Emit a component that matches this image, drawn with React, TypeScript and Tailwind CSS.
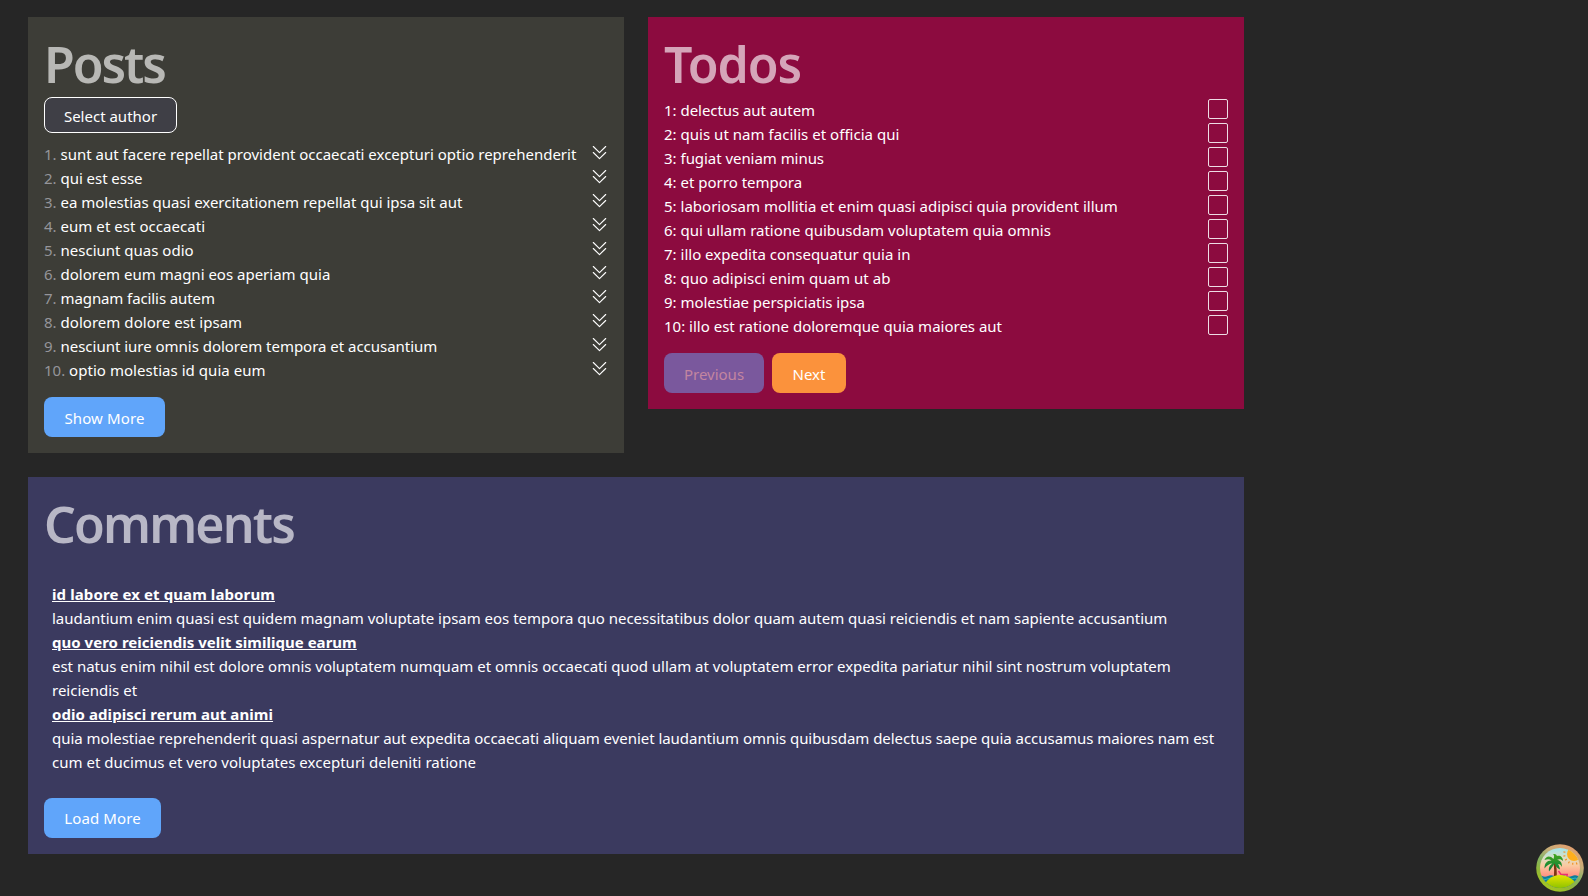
const posts = [
  { t: "sunt aut facere repellat provident occaecati excepturi optio reprehenderit", c: "" },
  { t: "qui est esse", c: "tracking-[-0.05px]" },
  { t: "ea molestias quasi exercitationem repellat qui ipsa sit aut", c: "tracking-[-0.02px]" },
  { t: "eum et est occaecati", c: "tracking-[0.05px]" },
  { t: "nesciunt quas odio", c: "" },
  { t: "dolorem eum magni eos aperiam quia", c: "" },
  { t: "magnam facilis autem", c: "tracking-[-0.1px]" },
  { t: "dolorem dolore est ipsam", c: "tracking-[0.04px]" },
  { t: "nesciunt iure omnis dolorem tempora et accusantium", c: "tracking-[-0.02px]" },
  { t: "optio molestias id quia eum", c: "tracking-[0.04px]" },
];

const todos = [
  { t: "delectus aut autem", c: "tracking-[-0.06px]" },
  { t: "quis ut nam facilis et officia qui", c: "tracking-[0.03px]" },
  { t: "fugiat veniam minus", c: "tracking-[-0.05px]" },
  { t: "et porro tempora", c: "" },
  { t: "laboriosam mollitia et enim quasi adipisci quia provident illum", c: "tracking-[0.01px]" },
  { t: "qui ullam ratione quibusdam voluptatem quia omnis", c: "" },
  { t: "illo expedita consequatur quia in", c: "" },
  { t: "quo adipisci enim quam ut ab", c: "tracking-[0.04px]" },
  { t: "molestiae perspiciatis ipsa", c: "tracking-[-0.04px]" },
  { t: "illo est ratione doloremque quia maiores aut", c: "" },
];

const comments = [
  {
    name: "id labore ex et quam laborum",
    nameClass: "tracking-[0.1px]",
    body: [
      {
        t: "laudantium enim quasi est quidem magnam voluptate ipsam eos tempora quo necessitatibus dolor quam autem quasi reiciendis et nam sapiente accusantium",
        c: "tracking-[-0.022px]",
      },
    ],
  },
  {
    name: "quo vero reiciendis velit similique earum",
    nameClass: "tracking-[0.02px]",
    body: [
      {
        t: "est natus enim nihil est dolore omnis voluptatem numquam et omnis occaecati quod ullam at voluptatem error expedita pariatur nihil sint nostrum voluptatem",
        c: "tracking-[-0.012px]",
      },
      { t: "reiciendis et", c: "" },
    ],
  },
  {
    name: "odio adipisci rerum aut animi",
    nameClass: "tracking-[0.07px]",
    body: [
      {
        t: "quia molestiae reprehenderit quasi aspernatur aut expedita occaecati aliquam eveniet laudantium omnis quibusdam delectus saepe quia accusamus maiores nam est",
        c: "tracking-[-0.043px]",
      },
      { t: "cum et ducimus et vero voluptates excepturi deleniti ratione", c: "tracking-[0.02px]" },
    ],
  },
];

function DoubleChevron() {
  return (
    <svg viewBox="0 0 16 16" className="mt-[3px] size-4 shrink-0" fill="none" stroke="currentColor" strokeWidth="1.1" strokeLinecap="round" strokeLinejoin="round">
      <path d="M1.3 2.5 7.5 8.7 13.7 2.5M1.3 8.5 7.5 14.7 13.7 8.5" />
    </svg>
  );
}

function IslandButton() {
  return (
    <button aria-label="Devtools" className="fixed right-1 bottom-1 size-12">
      <svg viewBox="0 0 48 48" className="size-12">
        <defs>
          <linearGradient id="ring" x1="0.8" y1="0.1" x2="0.3" y2="1">
            <stop offset="0" stopColor="#dfa070" />
            <stop offset="0.25" stopColor="#c9ad78" />
            <stop offset="0.5" stopColor="#82b264" />
            <stop offset="0.75" stopColor="#93b835" />
            <stop offset="1" stopColor="#a5c81f" />
          </linearGradient>
          <linearGradient id="sky" x1="0" y1="0" x2="0" y2="1">
            <stop offset="0.08" stopColor="#a0e4ec" />
            <stop offset="0.28" stopColor="#d8e0c8" />
            <stop offset="0.45" stopColor="#fbc9a0" />
            <stop offset="0.68" stopColor="#ff8f80" />
          </linearGradient>
          <linearGradient id="sand" x1="0" y1="0" x2="0" y2="1">
            <stop offset="0" stopColor="#e5e400" />
            <stop offset="1" stopColor="#76b900" />
          </linearGradient>
          <linearGradient id="leaf" x1="0" y1="0" x2="0" y2="1">
            <stop offset="0" stopColor="#43a51d" />
            <stop offset="1" stopColor="#087c3f" />
          </linearGradient>
          <clipPath id="disc"><circle cx="24" cy="24" r="20" /></clipPath>
        </defs>
        <circle cx="24" cy="24" r="23.8" fill="url(#ring)" />
        <g clipPath="url(#disc)">
          <rect width="48" height="48" fill="url(#sky)" />
          <circle cx="38" cy="10" r="7" fill="#ffae1c" />
          <circle cx="38" cy="10" r="9.8" fill="none" stroke="#ef9125" strokeWidth="2" strokeDasharray="1.2 2.8" />
          <path d="M0 32q3-1.5 6 0t6 0 6 0 6 0 6 0 6 0 6 0 6 0V48H0Z" fill="#0b7f9b" />
          <path d="M0 34.8q3-1.5 6 0t6 0 6 0 6 0 6 0 6 0 6 0 6 0" fill="none" stroke="#2fb7c0" strokeWidth="1" />
          <path d="M17 17q2 8 .5 18h3q1-11-1.500-18Z" fill="#7d3510" />
          <path d="M17.500 15C14 11 10 12 8.500 16c3-1 5-1 7 .5-5 0-7 3-7 8 2-3 5-5 8-5-3 2-4 4-3.500 8 2-3 4-5 5.500-8 1 3 3 5 5.500 6-.5-3-1-4-2-5.500 2 0 3 1 4 3 0-5-2-7-5-7 2-1 4-1 6 1 0-4-3-6-6-5-1-2-2-2-4-2 1 1 1.500 2 .5 5Z" fill="url(#leaf)" />
          <path d="m22.500 27 2.500 3.500h7M31 31v2" fill="none" stroke="#e8326f" strokeWidth="1.400" />
          <path d="M8 41C12 34.500 17 31 24 31S36 34.500 41 40L33 48H15Z" fill="url(#sand)" />
        </g>
      </svg>
    </button>
  );
}

export default function App() {
  return (
    <div className="min-h-screen bg-[#262626] pt-[17px] pl-7 font-['Noto_Sans',sans-serif] text-[15px] leading-6 text-white">
      <main className="grid w-[1216px] grid-cols-2 items-start gap-6 whitespace-nowrap">
        <section className="bg-[#3d3d37] p-4">
          <h1 className="h-16 text-[50px] leading-[62px] font-semibold tracking-[-2.1px] text-[#b8b8b5]">Posts</h1>
          <button className="block h-9 w-[133px] rounded-lg border border-white bg-[#3f3f46] pt-0.5">Select author</button>
          <ol className="mt-2">
            {posts.map((p, i) => (
              <li key={p.t} className="flex h-6 justify-between leading-[26px]">
                <p><span className="text-[#95959a]">{i + 1}. </span><span className={p.c}>{p.t}</span></p>
                <DoubleChevron />
              </li>
            ))}
          </ol>
          <button className="mt-4 block h-10 w-[121px] rounded-lg bg-[#60a5fa] pt-0.5 tracking-[0.12px]">Show More</button>
        </section>
        <section className="bg-[#8c0b3f] p-4">
          <h1 className="h-16 text-[50px] leading-[62px] font-semibold tracking-[-1.1px] text-[#d5a5b9]">Todos</h1>
          <ul>
            {todos.map((p, i) => (
              <li key={p.t} className="flex h-6 justify-between leading-[26px]">
                <p>{i + 1}: <span className={p.c}>{p.t}</span></p>
                <span className="mt-0.5 size-5 rounded-[2px] border border-[#eedce4]" />
              </li>
            ))}
          </ul>
          <div className="mt-4 flex gap-2">
            <button className="h-10 w-[100px] rounded-lg bg-[#7a589d] pt-0.5 text-[#c385a0]">Previous</button>
            <button className="h-10 w-[74px] rounded-lg bg-[#fb923c] pt-0.5">Next</button>
          </div>
        </section>
        <section className="col-span-2 bg-[#3b3a5f] p-4">
          <h1 className="h-16 text-[50px] leading-[62px] font-semibold tracking-[-1.85px] text-[#b8b7c6]">Comments</h1>
          <div className="px-2 pt-[25px] pb-6">
            {comments.map((c) => (
              <div key={c.name}>
                <h2 className="font-bold"><span className={`underline ${c.nameClass}`}>{c.name}</span></h2>
                {c.body.map((b) => <p key={b.t} className={b.c}>{b.t}</p>)}
              </div>
            ))}
          </div>
          <button className="block h-10 w-[117px] rounded-lg bg-[#60a5fa] tracking-[0.12px]">Load More</button>
        </section>
      </main>
      <IslandButton />
    </div>
  );
}
